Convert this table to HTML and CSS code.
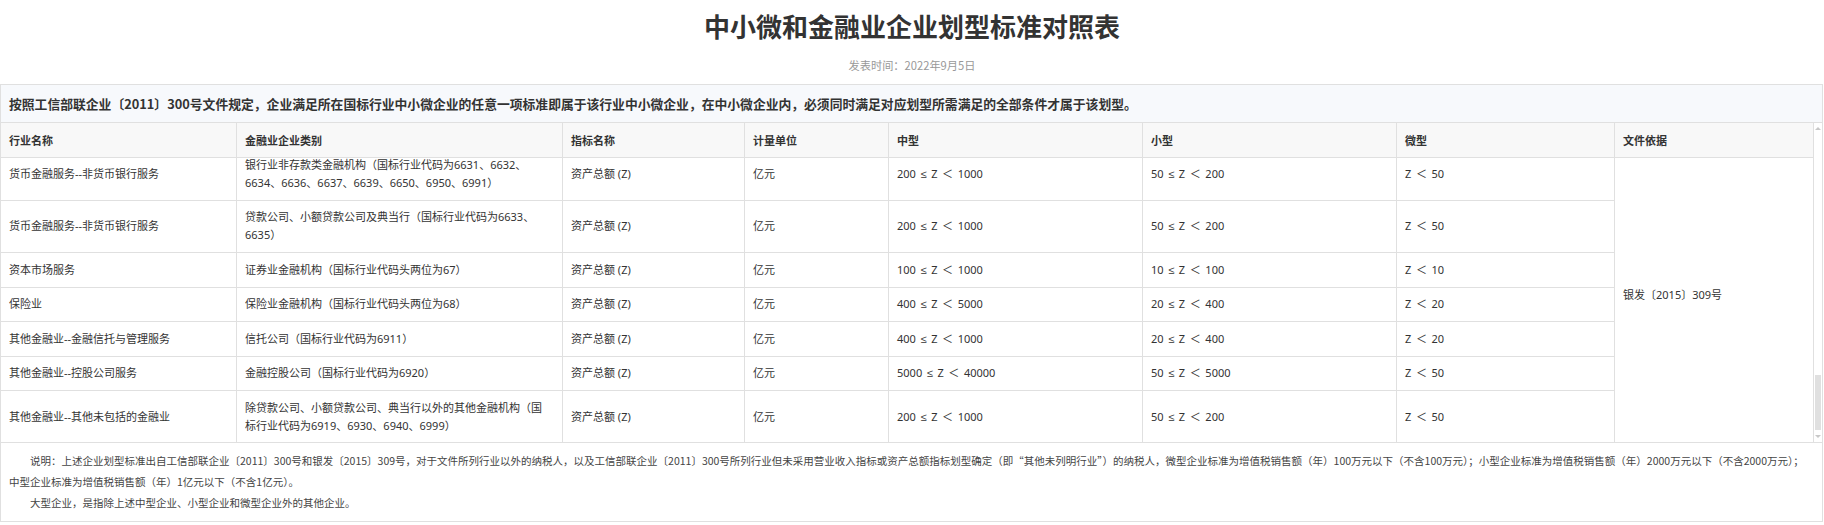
FILE: index.html
```html
<!DOCTYPE html>
<html lang="zh-CN">
<head>
<meta charset="utf-8">
<title>中小微和金融业企业划型标准对照表</title>
<link rel="stylesheet" href="styles.css">
</head>
<body>
<h1 class="title">中小微和金融业企业划型标准对照表</h1>
<div class="meta">发表时间：2022年9月5日</div>
<div class="panel">
  <div class="intro">按照工信部联企业〔2011〕300号文件规定，企业满足所在国标行业中小微企业的任意一项标准即属于该行业中小微企业，在中小微企业内，必须同时满足对应划型所需满足的全部条件才属于该划型。</div>
  <div class="tablewrap">
    <div class="tablearea">
      <table class="grid">
        <colgroup>
          <col class="c1"><col class="c2"><col class="c3"><col class="c4"><col class="c5"><col class="c6"><col class="c7"><col class="c8">
        </colgroup>
        <thead>
          <tr><th>行业名称</th><th>金融业企业类别</th><th>指标名称</th><th>计量单位</th><th>中型</th><th>小型</th><th>微型</th><th>文件依据</th></tr>
        </thead>
      </table>
      <div class="bodyclip">
        <table class="grid body">
          <colgroup>
            <col class="c1"><col class="c2"><col class="c3"><col class="c4"><col class="c5"><col class="c6"><col class="c7"><col class="c8">
          </colgroup>
          <tbody>
            <tr><td>货币金融服务--非货币银行服务</td><td>银行业非存款类金融机构（国标行业代码为6631、6632、6634、6636、6637、6639、6650、6950、6991）</td><td>资产总额 (Z)</td><td>亿元</td><td class="range">200 ≤ Z ＜ 1000</td><td class="range">50 ≤ Z ＜ 200</td><td class="range">Z ＜ 50</td><td class="basis" rowspan="7">银发〔2015〕309号</td></tr>
            <tr><td>货币金融服务--非货币银行服务</td><td>贷款公司、小额贷款公司及典当行（国标行业代码为6633、6635）</td><td>资产总额 (Z)</td><td>亿元</td><td class="range">200 ≤ Z ＜ 1000</td><td class="range">50 ≤ Z ＜ 200</td><td class="range">Z ＜ 50</td></tr>
            <tr><td>资本市场服务</td><td>证券业金融机构（国标行业代码头两位为67）</td><td>资产总额 (Z)</td><td>亿元</td><td class="range">100 ≤ Z ＜ 1000</td><td class="range">10 ≤ Z ＜ 100</td><td class="range">Z ＜ 10</td></tr>
            <tr><td>保险业</td><td>保险业金融机构（国标行业代码头两位为68）</td><td>资产总额 (Z)</td><td>亿元</td><td class="range">400 ≤ Z ＜ 5000</td><td class="range">20 ≤ Z ＜ 400</td><td class="range">Z ＜ 20</td></tr>
            <tr><td>其他金融业--金融信托与管理服务</td><td>信托公司（国标行业代码为6911）</td><td>资产总额 (Z)</td><td>亿元</td><td class="range">400 ≤ Z ＜ 1000</td><td class="range">20 ≤ Z ＜ 400</td><td class="range">Z ＜ 20</td></tr>
            <tr><td>其他金融业--控股公司服务</td><td>金融控股公司（国标行业代码为6920）</td><td>资产总额 (Z)</td><td>亿元</td><td class="range">5000 ≤ Z ＜ 40000</td><td class="range">50 ≤ Z ＜ 5000</td><td class="range">Z ＜ 50</td></tr>
            <tr class="last"><td>其他金融业--其他未包括的金融业</td><td>除贷款公司、小额贷款公司、典当行以外的其他金融机构（国标行业代码为6919、6930、6940、6999）</td><td>资产总额 (Z)</td><td>亿元</td><td class="range">200 ≤ Z ＜ 1000</td><td class="range">50 ≤ Z ＜ 200</td><td class="range">Z ＜ 50</td></tr>
          </tbody>
        </table>
      </div>
    </div>
    <div class="scrollbar">
      <div class="sb-btn"><span class="arrow-up"></span></div>
      <div class="sb-track"><div class="sb-thumb"></div></div>
      <div class="sb-btn"><span class="arrow-down"></span></div>
    </div>
  </div>
  <div class="notes">
    <p>说明：上述企业划型标准出自工信部联企业〔2011〕300号和银发〔2015〕309号，对于文件所列行业以外的纳税人，以及工信部联企业〔2011〕300号所列行业但未采用营业收入指标或资产总额指标划型确定（即“其他未列明行业”）的纳税人，微型企业标准为增值税销售额（年）100万元以下（不含100万元）；小型企业标准为增值税销售额（年）2000万元以下（不含2000万元）；中型企业标准为增值税销售额（年）1亿元以下（不含1亿元）。</p>
    <p>大型企业，是指除上述中型企业、小型企业和微型企业外的其他企业。</p>
  </div>
</div>
</body>
</html>
```
FILE: styles.css
```css
* { box-sizing: border-box; }
html, body { margin: 0; padding: 0; background: #fff; }
body {
  font-family: "Noto Sans CJK SC", "Noto Sans", sans-serif;
  color: #333;
}
.title {
  margin: 0;
  padding-top: 8px;
  height: 44px;
  line-height: 36px;
  font-size: 26px;
  font-weight: 700;
  text-align: center;
  color: #333;
}
.meta {
  margin-top: 11px;
  line-height: 20px;
  font-size: 11.2px;
  color: #999;
  text-align: center;
}
.panel {
  margin: 9px 1px 0 0;
  border: 1px solid #e0e0e0;
}
.intro {
  height: 38px;
  line-height: 37px;
  padding: 0 8px;
  font-size: 12.8px;
  font-weight: 700;
  color: #333;
  background: #f7f9fc;
  border-bottom: 1px solid #e0e0e0;
  white-space: nowrap;
  overflow: hidden;
}
.tablewrap {
  display: flex;
  border-bottom: 1px solid #e0e0e0;
}
.tablearea {
  flex: none;
  width: 1813px;
}
.grid {
  width: 1813px;
  table-layout: fixed;
  border-collapse: separate;
  border-spacing: 0;
}
.c1 { width: 236px; }
.c2 { width: 326px; }
.c3 { width: 182px; }
.c4 { width: 144px; }
.c5 { width: 254px; }
.c6 { width: 254px; }
.c7 { width: 218px; }
.c8 { width: 199px; }
.grid th,
.grid td {
  padding: 7.75px 14px 7.75px 8px;
  line-height: 18px;
  font-size: 11px;
  text-align: left;
  vertical-align: middle;
  border-right: 1px solid #e0e0e0;
  border-bottom: 1px solid #e0e0e0;
  color: #333;
}
.grid td {
  font-family: "Noto Sans", "Liberation Sans", "Noto Sans CJK SC", sans-serif;
}
.grid td.range {
  word-spacing: 1.75px;
}
.grid th {
  background: #f8f8f8;
  font-weight: 700;
}
.bodyclip {
  height: 284px;
  overflow: hidden;
}
.body {
  margin-top: -9.5px;
}
.body tr.last td,
.body td.basis {
  border-bottom: 0;
}
.scrollbar {
  flex: none;
  width: 8px;
  display: flex;
  flex-direction: column;
}
.sb-btn {
  height: 10px;
  display: flex;
  align-items: center;
  justify-content: center;
}
.arrow-up {
  width: 0; height: 0;
  border-left: 3px solid transparent;
  border-right: 3px solid transparent;
  border-bottom: 3px solid #c8c8c8;
}
.arrow-down {
  width: 0; height: 0;
  border-left: 3px solid transparent;
  border-right: 3px solid transparent;
  border-top: 3px solid #c8c8c8;
}
.sb-track {
  flex: 1;
  display: flex;
  flex-direction: column;
  justify-content: flex-end;
  padding: 0 1px 2px;
}
.sb-thumb {
  height: 55px;
  background: #e0e0e0;
}
.notes {
  padding: 7.5px 16px 7.5px 8px;
  font-size: 10.5px;
  line-height: 21px;
  color: #444;
}
.notes p {
  margin: 0;
  text-indent: 21px;
}
```
